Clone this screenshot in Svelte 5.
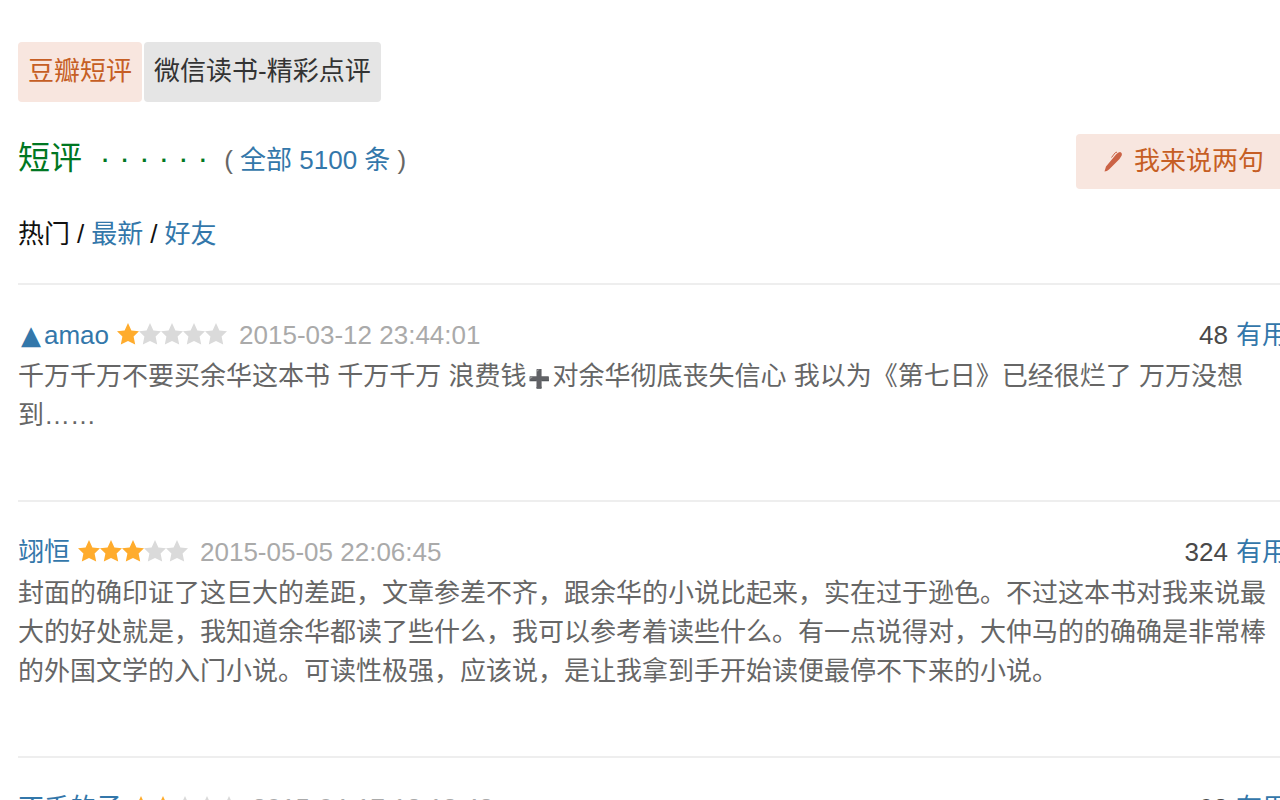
<script>
  let source = "douban";

  const sorts = ["热门", "最新", "好友"];
  let sort = "热门";

  let comments = [
    {
      name: "▲amao",
      stars: 1,
      time: "2015-03-12 23:44:01",
      votes: 48,
      text: "千万千万不要买余华这本书 千万千万 浪费钱➕对余华彻底丧失信心 我以为《第七日》已经很烂了 万万没想到……"
    },
    {
      name: "翊恒",
      stars: 3,
      time: "2015-05-05 22:06:45",
      votes: 324,
      text: "封面的确印证了这巨大的差距，文章参差不齐，跟余华的小说比起来，实在过于逊色。不过这本书对我来说最大的好处就是，我知道余华都读了些什么，我可以参考着读些什么。有一点说得对，大仲马的的确确是非常棒的外国文学的入门小说。可读性极强，应该说，是让我拿到手开始读便最停不下来的小说。"
    },
    {
      name: "不千的子",
      stars: 2,
      time: "2015-04-17 18:18:48",
      votes: 98,
      text: ""
    }
  ];

  // symbols get a full-width cell of their own
  const split = text => text.split(/([▲➕])/).filter(part => part);

  function vote(comment) {
    comment.votes += 1;
    comments = comments;
  }
</script>

<div class="page">
  <div class="content">
    <div class="tabs">
      <button class:active={source === "douban"} on:click={() => (source = "douban")}>豆瓣短评</button>
      <button class:active={source === "weread"} on:click={() => (source = "weread")}>微信读书-精彩点评</button>
    </div>

    <div class="title-row">
      <h2>短评&nbsp; · · · · · ·</h2>
      <span class="total">( <a href="#all">全部 5100 条</a> )</span>
      <button class="write">
        <svg viewBox="0 0 20 22" width="20" height="22" aria-hidden="true">
          <path d="M1.5 20.5L3 15.5L13 3.5Q15 1 17 1Q19.5 1.6 18.7 4.5L16.5 8L6 18.5Q4 20.5 1.5 20.5Z" />
          <path class="clip" d="M8.5 6.5L12 2Q12.6 1.2 14 1.2" />
        </svg>
        我来说两句
      </button>
    </div>

    <nav>
      {#each sorts as item, i}
        {#if i > 0}<span>/</span>{/if}
        {#if item === sort}
          <span>{item}</span>
        {:else}
          <a href="#{item}" on:click={() => (sort = item)}>{item}</a>
        {/if}
      {/each}
    </nav>

    <ul>
      {#each comments as comment}
        <li>
          <div class="info">
            <a href="#user">{#each split(comment.name) as part}{#if part === "▲"}<span class="symbol">{part}</span>{:else}{part}{/if}{/each}</a>
            <span class="stars" role="img" aria-label="{comment.stars} / 5">
              {#each [1, 2, 3, 4, 5] as n}
                <svg class:on={n <= comment.stars} viewBox="0 0 22 22" width="22" height="22" aria-hidden="true">
                  <path d="M11 0L14.4 7.4L22 8.2L16.6 13.6L18.2 21.6L11 18L3.8 21.6L5.4 13.6L0 8.2L7.6 7.4Z" />
                </svg>
              {/each}
            </span>
            <span class="time">{comment.time}</span>
            <span class="vote">
              <span>{comment.votes}</span>
              <button on:click={() => vote(comment)}>有用</button>
            </span>
          </div>
          <p>{#each split(comment.text) as part}{#if part === "➕"}<span class="symbol plus">{part}</span>{:else}{part}{/if}{/each}</p>
        </li>
      {/each}
    </ul>
  </div>
</div>

<style>
  :global(body) {
    margin: 0;
    background: #fff;
  }
  .page {
    height: 100vh;
    overflow: hidden;
    font: 26px/39px "Liberation Sans", "Noto Sans CJK SC", "DejaVu Sans", sans-serif;
    color: #111;
  }
  /* the column runs a little past the right edge of the window */
  .content {
    margin: 0 -8px 0 18px;
    padding-top: 42px;
  }
  a {
    color: #37a;
    text-decoration: none;
  }
  button {
    border: 0;
    padding: 0;
    background: none;
    font: inherit;
    cursor: pointer;
  }

  .tabs {
    display: flex;
    gap: 2px;
  }
  .tabs button {
    height: 60px;
    padding: 0 10px 2px;
    border-radius: 4px;
    background: #e5e5e5;
    color: #333;
  }
  .tabs button.active {
    background: #f8e6df;
    color: #c65e24;
  }

  .title-row {
    display: flex;
    align-items: center;
    margin-top: 32px;
  }
  h2 {
    margin: 0;
    padding-bottom: 6px;
    font-size: 32px;
    font-weight: normal;
    color: #007722;
  }
  .total {
    margin-left: 16px;
    padding-bottom: 2px;
    color: #666;
  }
  .write {
    display: flex;
    align-items: center;
    gap: 11px;
    height: 55px;
    margin-left: auto;
    padding: 0 24px 0 27px;
    border-radius: 4px;
    background: #f8e6df;
    color: #c65e24;
  }
  .write path {
    fill: #cb6346;
  }
  .write .clip {
    fill: none;
    stroke: #cb6346;
    stroke-width: 1;
  }

  nav {
    display: flex;
    gap: 7px;
    margin-top: 26px;
    padding-bottom: 29px;
  }

  ul {
    margin: 0;
    padding: 0;
    list-style: none;
  }
  li {
    padding: 31px 0 65px;
    border-top: 2px solid #eee;
  }
  .info {
    display: flex;
    align-items: center;
    margin-bottom: 2px;
  }
  .symbol {
    display: inline-block;
    width: 26px;
    font-family: "DejaVu Sans", sans-serif;
    line-height: 26px;
    text-align: center;
  }
  .plus {
    font-size: 18px;
    color: #494949;
  }
  .stars {
    display: flex;
    margin: 0 12px 0 8px;
    padding-bottom: 4px;
  }
  .stars path {
    fill: #dadada;
  }
  .stars .on path {
    fill: #ffac2d;
  }
  .time {
    color: #aaa;
  }
  .vote {
    display: flex;
    gap: 8px;
    margin-left: auto;
    color: #494949;
  }
  .vote button {
    color: #37a;
  }
  p {
    margin: 0;
    color: #666;
  }
</style>
